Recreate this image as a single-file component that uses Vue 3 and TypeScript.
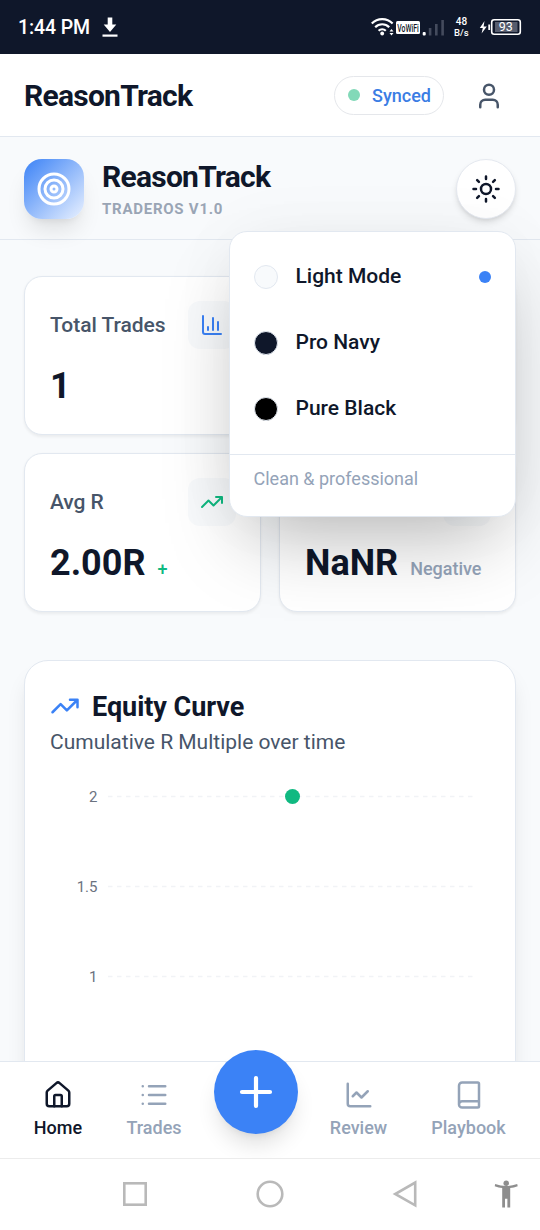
<script setup lang="ts">
interface Theme { name: string; swatch: string; active: boolean }
interface Tick { label: string; y: number }

const themes: Theme[] = [
  { name: 'Light Mode', swatch: 'light', active: true },
  { name: 'Pro Navy', swatch: 'navy', active: false },
  { name: 'Pure Black', swatch: 'black', active: false },
]
const ticks: Tick[] = [
  { label: '2', y: 16.5 },
  { label: '1.5', y: 106.5 },
  { label: '1', y: 196.5 },
]
</script>

<template>
  <div class="phone">
    <div class="status">
      <span class="clock">1:44 PM</span>
      <svg class="download" width="16" height="22" viewBox="0 0 16 22">
        <path d="M5.7 0.5h4.6v7h4L8 15 1.7 7.500h4z" fill="#fff" />
        <rect x="0.500" y="17.500" width="15" height="2.200" fill="#fff" />
      </svg>
      <svg class="signals" width="154" height="30" viewBox="0 0 154 30">
        <g fill="none" stroke="#fff" stroke-width="2.200">
          <path d="M1.800 11.500a14.500 14.500 0 0 1 20.800 0" />
          <path d="M5.200 15.200a9.800 9.800 0 0 1 14 0" />
          <path d="M8.600 18.800a5.200 5.200 0 0 1 7.200 0" />
        </g>
        <circle cx="12.200" cy="21.500" r="1.900" fill="#fff" />
        <path d="M19.500 19.500l2-2.500 2 2.500zM19.500 21l2 2.500 2-2.500z" fill="#fff" />
        <rect x="26" y="9" width="24" height="13" rx="1.500" fill="#fff" />
        <text x="38" y="19.500" text-anchor="middle" font-size="11" font-weight="500" fill="#111827" textLength="21.500" lengthAdjust="spacingAndGlyphs">VoWiFi</text>
        <rect x="52.700" y="20" width="3" height="3.500" rx="1" fill="#fff" />
        <rect x="58.800" y="16" width="2.600" height="7.500" fill="#444b5d" />
        <rect x="65" y="12" width="2.600" height="11.500" fill="#444b5d" />
        <rect x="71.300" y="8" width="2.600" height="15.500" fill="#444b5d" />
        <text x="91.500" y="13.200" text-anchor="middle" font-size="10" font-weight="500" fill="#fff">48</text>
        <text x="91.300" y="24.300" text-anchor="middle" font-size="9.500" font-weight="500" fill="#fff">B/s</text>
        <path d="M114.500 9l-4.700 7h3l-1.200 5.500 5.200-7h-3.200z" fill="#fff" />
        <rect x="118.300" y="12.500" width="1.800" height="5.500" fill="#fff" />
        <rect x="121.700" y="7.700" width="28.600" height="14.600" rx="2.500" fill="none" stroke="#fff" stroke-width="1.600" />
        <rect x="125" y="10" width="22.500" height="10" fill="#565c6d" />
        <text x="135.700" y="19.400" text-anchor="middle" font-size="12.500" font-weight="400" fill="#fff">93</text>
      </svg>
    </div>

    <header class="topbar">
      <h1 class="brand">ReasonTrack</h1>
      <div class="synced"><i></i><span>Synced</span></div>
      <svg class="user icon" width="30" height="30" viewBox="0 0 24 24">
        <path d="M19 21v-2a4 4 0 0 0-4-4H9a4 4 0 0 0-4 4v2" /><circle cx="12" cy="7" r="4" />
      </svg>
    </header>

    <section class="hero">
      <div class="logo">
        <svg class="icon" width="36" height="36" viewBox="0 0 24 24">
          <circle cx="12" cy="12" r="10" /><circle cx="12" cy="12" r="6" /><circle cx="12" cy="12" r="2" />
        </svg>
      </div>
      <div class="hero-text">
        <h2 class="brand">ReasonTrack</h2>
        <p>TRADEROS V1.0</p>
      </div>
      <div class="theme">
        <button class="theme-btn" aria-label="Theme">
          <svg class="icon" width="30" height="30" viewBox="0 0 24 24">
            <circle cx="12" cy="12" r="4" />
            <path d="M12 2v2M12 20v2M4.930 4.930l1.410 1.410M17.660 17.660l1.410 1.410M2 12h2M20 12h2M6.340 17.660l-1.410 1.410M19.070 4.930l-1.410 1.410" />
          </svg>
        </button>
        <div class="menu">
          <div class="options">
            <div v-for="t in themes" :key="t.name" class="option">
              <i class="swatch" :class="t.swatch"></i>
              <span>{{ t.name }}</span>
              <i v-if="t.active" class="active"></i>
            </div>
          </div>
          <div class="hint">Clean &amp; professional</div>
        </div>
      </div>
    </section>

    <main class="content">
      <div class="stats">
        <article class="card">
          <div class="card-head">
            <span>Total Trades</span>
            <div class="chip blue">
              <svg class="icon" width="24" height="24" viewBox="0 0 24 24">
                <path d="M3 3v16a2 2 0 0 0 2 2h16M8 17v-3M13 17V5M18 17V9" />
              </svg>
            </div>
          </div>
          <div class="value"><b>1</b></div>
        </article>
        <article class="card"></article>
        <article class="card">
          <div class="card-head">
            <span>Avg R</span>
            <div class="chip green">
              <svg class="icon" width="24" height="24" viewBox="0 0 24 24">
                <path d="M22 7l-8.500 8.500-5-5L2 17M16 7h6v6" />
              </svg>
            </div>
          </div>
          <div class="value"><b>2.00R</b><small class="up">+</small></div>
        </article>
        <article class="card">
          <div class="card-head"><span></span><div class="chip"></div></div>
          <div class="value"><b>NaNR</b><small>Negative</small></div>
        </article>
      </div>

      <article class="equity">
        <div class="equity-title">
          <svg class="icon" width="30" height="30" viewBox="0 0 24 24">
            <path d="M22 7l-8.500 8.500-5-5L2 17M16 7h6v6" />
          </svg>
          <h3>Equity Curve</h3>
        </div>
        <p>Cumulative R Multiple over time</p>
        <svg class="chart" width="440" height="300" viewBox="0 0 440 300">
          <g v-for="t in ticks" :key="t.label">
            <line x1="58" x2="426" :y1="t.y" :y2="t.y" stroke="#f1f3f6" stroke-width="1.500" stroke-dasharray="4.5 4.5" />
            <text x="47.500" :y="t.y + 5.500" text-anchor="end" font-size="15" fill="#6b7280">{{ t.label }}</text>
          </g>
          <circle cx="242.500" cy="16.500" r="7.500" fill="#10b981" />
        </svg>
      </article>
    </main>

    <nav class="tabs">
      <a class="tab on">
        <svg class="icon" width="30" height="30" viewBox="0 0 24 24">
          <path d="M15 21v-8a1 1 0 0 0-1-1h-4a1 1 0 0 0-1 1v8" />
          <path d="M3 10a2 2 0 0 1 .709-1.528l7-5.999a2 2 0 0 1 2.582 0l7 5.999A2 2 0 0 1 21 10v9a2 2 0 0 1-2 2H5a2 2 0 0 1-2-2z" />
        </svg>
        <span>Home</span>
      </a>
      <a class="tab">
        <svg class="icon" width="30" height="30" viewBox="0 0 24 24">
          <path d="M3 5h.01M3 12h.01M3 19h.01M8 5h13M8 12h13M8 19h13" />
        </svg>
        <span>Trades</span>
      </a>
      <button class="fab" aria-label="Add">
        <svg class="icon plus" width="42" height="42" viewBox="0 0 24 24"><path d="M4 12h16M12 4v16" /></svg>
      </button>
      <a class="tab">
        <svg class="icon" width="30" height="30" viewBox="0 0 24 24">
          <path d="M3 3v16a2 2 0 0 0 2 2h16M19 9l-5 5-4-4-3 3" />
        </svg>
        <span>Review</span>
      </a>
      <a class="tab">
        <svg class="icon" width="30" height="30" viewBox="0 0 24 24">
          <path d="M4 19.500v-15A2.500 2.500 0 0 1 6.500 2H19a1 1 0 0 1 1 1v18a1 1 0 0 1-1 1H6.500a1 1 0 0 1 0-5H20" />
        </svg>
        <span>Playbook</span>
      </a>
    </nav>

    <div class="system">
      <svg width="540" height="71" viewBox="0 0 540 71">
        <g fill="none" stroke="#b9b9b9" stroke-width="2.600">
          <rect x="124.300" y="24.300" width="21.400" height="21.400" />
          <circle cx="270" cy="35" r="12.300" />
          <path d="M415.200 23.500v22.800L395.200 35z" />
        </g>
        <g fill="#8e8e8e">
          <circle cx="506.200" cy="24.300" r="2.700" />
          <path d="M494.700 27.300l.5-2.200q11 4 22 0l.5 2.200q-4 1.400-7.500 1.800V48.500h-2.800v-8.700h-2.400v8.700h-2.800V29.100q-3.500-.4-7.500-1.800z" />
        </g>
      </svg>
    </div>
  </div>
</template>

<style>
body { margin: 0; background: #fff; }
</style>

<style scoped>
.phone {
  width: 540px; height: 1230px; overflow: hidden;
  display: flex; flex-direction: column;
  background: #f8fafc; color: #0f172a;
  font-family: Roboto, "Liberation Sans", sans-serif;
}
.phone * { box-sizing: border-box; }
h1, h2, h3, p { margin: 0; }
button { border: 0; padding: 0; }
.icon { fill: none; stroke: currentColor; stroke-width: 2; stroke-linecap: round; stroke-linejoin: round; display: block; }

.status { height: 54px; flex: none; background: #0f172a; color: #fff; display: flex; align-items: center; padding: 0 16px 0 18px; }
.clock { width: 74px; white-space: nowrap; font-size: 19.500px; font-weight: 500; letter-spacing: -0.1px; line-height: 24px; padding-top: 2px; }
.download { margin-left: 10px; margin-top: 1px; }
.signals { margin-left: auto; margin-top: -1px; }

.topbar { height: 83px; flex: none; background: #fff; border-bottom: 1px solid #e2e8f0; display: flex; align-items: center; padding: 0 36px 0 24px; }
.brand { font-size: 30px; line-height: 36px; font-weight: 700; letter-spacing: -0.75px; padding-top: 1px; }
.synced { margin-left: auto; width: 110px; height: 39px; border: 1.500px solid #e5e7eb; border-radius: 20px; display: flex; align-items: center; padding-left: 13px; color: #3b7de4; font-size: 18px; font-weight: 500; }
.synced i { width: 12px; height: 12px; border-radius: 50%; background: #82d9b8; margin-right: 12px; }
.user { margin-left: 30px; margin-top: 1px; color: #475569; }

.hero { height: 103px; flex: none; border-bottom: 1.500px solid #e2e8f0; display: flex; align-items: center; padding: 0 24px; position: relative; z-index: 2; }
.logo { width: 60px; height: 60px; margin-top: 1px; border-radius: 18px; background: linear-gradient(135deg, #3b82f6, #e9f1ff); color: #fff; display: grid; place-items: center; box-shadow: 0 15px 22px -4px rgba(0,0,0,.1), 0 6px 9px -6px rgba(0,0,0,.1); }
.hero-text { margin-left: 18px; padding-top: 1px; }
.hero-text p { font-size: 15px; line-height: 20px; margin-top: 4px; font-weight: 700; letter-spacing: 0.75px; color: #9aa5b5; }
.theme { margin-left: auto; position: relative; }
.theme-btn { width: 60px; height: 60px; margin-top: 1px; display: grid; place-items: center; border-radius: 50%; border: 1.500px solid #e5e9f0; background: #fff; color: #0f172a; box-shadow: 0 4px 7px -1px rgba(0,0,0,.12), 0 2px 4px -2px rgba(0,0,0,.1); }
.menu { position: absolute; right: 0.500px; top: 73px; width: 287px; height: 286px; background: #fff; border: 1px solid #e2e8f0; border-radius: 18px; box-shadow: 0 37px 75px -18px rgba(0,0,0,.27), 0 0 75px rgba(0,0,0,.035); }
.options { padding: 12px 0; border-bottom: 1.500px solid #e2e8f0; }
.option { height: 66px; display: flex; align-items: center; padding: 0 24px; font-size: 21px; font-weight: 500; }
.option span { padding-bottom: 1px; }
.swatch { width: 24px; height: 24px; border-radius: 50%; border: 1.500px solid #e2e8f0; margin-right: 18px; }
.light { background: #f8fafc; }
.navy { background: #0f172a; }
.black { background: #000; }
.active { width: 12px; height: 12px; border-radius: 50%; background: #3b82f6; margin-left: auto; }
.hint { padding: 12px 24px; font-size: 18px; line-height: 24px; color: #94a3b8; }

.content { flex: 1; min-height: 0; overflow: hidden; padding: 36px 24px 0; }
.stats { display: grid; grid-template-columns: 1fr 1fr; gap: 18px; }
.card { height: 159px; background: #fff; border: 1.500px solid #e2e8f0; border-radius: 18px; padding: 24px 24px 24px 25px; box-shadow: 0 1.500px 3px rgba(0,0,0,.06); }
.card-head { height: 48px; display: flex; justify-content: space-between; align-items: center; font-size: 21px; font-weight: 500; letter-spacing: -0.05px; color: #475569; }
.chip { width: 48px; height: 48px; border-radius: 12px; background: #f8fafc; display: grid; place-items: center; }
.blue { color: #3b82f6; }
.green { color: #10b981; }
.value { margin-top: 13px; height: 48px; display: flex; align-items: baseline; line-height: 48px; }
.value b { font-size: 36px; font-weight: 700; }
.value small { font-size: 18px; font-weight: 500; margin-left: 12px; color: #94a3b8; }
.value .up { color: #10b981; }
.equity { margin-top: 48px; height: 560px; background: #fff; border: 1.500px solid #e2e8f0; border-radius: 24px; padding: 27px 24px 27px 25px; box-shadow: 0 15px 22px -4px rgba(0,0,0,.1), 0 6px 9px -6px rgba(0,0,0,.1); }
.equity-title { display: flex; align-items: center; height: 36px; color: #3b82f6; }
.equity-title h3 { margin-left: 12px; padding-top: 1px; font-size: 27px; line-height: 36px; font-weight: 700; letter-spacing: -0.05px; color: #0f172a; }
.equity p { font-size: 21px; line-height: 30px; margin-top: 3px; color: #475569; }
.chart { display: block; margin-top: 23px; }

.tabs { position: relative; z-index: 3; height: 97px; flex: none; background: #fff; border-top: 1.500px solid #e2e8f0; padding: 0 10px; display: grid; grid-template-columns: 96px 96px 108px 97px 123px; }
.tab { display: flex; flex-direction: column; align-items: center; padding-top: 18px; color: #94a3b8; font-size: 18px; font-weight: 500; }
.tab span { line-height: 24px; margin-top: 6px; }
.on { color: #0f172a; }
.fab { width: 84px; height: 84px; margin: -12px auto 0; border-radius: 50%; background: #3b82f6; color: #fff; display: grid; place-items: center; box-shadow: 0 15px 22px -4px rgba(0,0,0,.12), 0 6px 9px -6px rgba(0,0,0,.1); }
.plus { stroke-width: 2.400; }
.system { height: 72px; flex: none; position: relative; z-index: 4; background: #fff; border-top: 1px solid #ececec; }
</style>
